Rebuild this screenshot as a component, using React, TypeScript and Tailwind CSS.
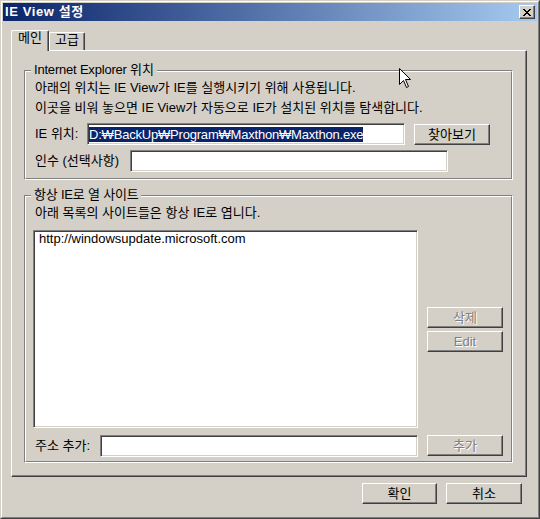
import React from 'react';

const btn =
  'flex items-center justify-center border border-t-white border-l-white border-r-[#404040] border-b-[#404040] shadow-[inset_-1px_-1px_0_#808080] bg-[#d4d0c8] leading-[14px]';
const sunken =
  'border border-t-[#808080] border-l-[#808080] border-r-white border-b-white shadow-[inset_1px_1px_0_#404040,inset_-1px_-1px_0_#d4d0c8] bg-white';
const disabledText = 'text-[#808080] [text-shadow:1px_1px_0_#ffffff]';

function Group({ label, className, children }: { label: string; className?: string; children?: React.ReactNode }) {
  return (
    <div className={`relative border border-t-[#808080] border-l-[#808080] border-r-white border-b-white ${className ?? ''}`}>
      <div className="h-full border border-t-white border-l-white border-r-[#808080] border-b-[#808080]">{children}</div>
      <span className="absolute left-[6px] top-[-8px] px-[3px] bg-[#d4d0c8] leading-[14px] whitespace-nowrap tracking-[-0.2px]">{label}</span>
    </div>
  );
}

function CloseX() {
  const rows: [number, number][][] = [
    [[0, 2], [6, 2]],
    [[1, 2], [5, 2]],
    [[2, 4]],
    [[3, 2]],
    [[2, 4]],
    [[1, 2], [5, 2]],
    [[0, 2], [6, 2]],
  ];
  return (
    <svg width="8" height="7" viewBox="0 0 8 7" shapeRendering="crispEdges">
      {rows.map((r, y) => r.map(([x, w], i) => <rect key={`${y}-${i}`} x={x} y={y} width={w} height={1} fill="#000" />))}
    </svg>
  );
}

function Cursor() {
  return (
    <svg width="13" height="21" viewBox="0 0 13 21" className="absolute left-[398px] top-[67px]">
      <path d="M0.5 0.5 V16.5 L4.5 12.5 L7.5 19.5 L9.5 18.5 L6.5 11.5 H11.5 Z" fill="#fff" stroke="#000" strokeWidth="1" />
    </svg>
  );
}

export default function App() {
  return (
    <div className="relative w-[540px] h-[519px] bg-[#d4d0c8] border border-t-[#d4d0c8] border-l-[#d4d0c8] border-r-[#404040] border-b-[#404040] [font-family:'Liberation_Sans','Noto_Sans_CJK_KR',sans-serif] text-[13px] leading-[14px] text-black">
      <div className="h-full border border-t-white border-l-white border-r-[#808080] border-b-[#808080] p-px flex flex-col">
        {/* title bar */}
        <div className="h-[18px] shrink-0 flex items-center bg-linear-to-r/srgb from-[#0a246a] to-[#a6caf0] pl-[2px] pr-[2px]">
          <span className="text-white font-bold text-[13px] leading-[14px] tracking-[0.6px]">IE View 설정</span>
          <div className={`ml-auto w-[16px] h-[14px] ${btn}`}>
            <CloseX />
          </div>
        </div>

        {/* body */}
        <div className="flex-1 px-[8px] pt-[9px]">
          {/* tabs */}
          <div className="relative z-10 flex items-end h-[21px] mb-[-1px]">
            <div className="w-[38px] h-[21px] border-l border-t border-l-white border-t-white border-r border-r-[#404040] shadow-[inset_-1px_0_0_#808080] bg-[#d4d0c8] rounded-tl-[2px] rounded-tr-[2px] text-center">
              메인
            </div>
            <div className="w-[36px] h-[18px] mb-px border-l border-t border-l-white border-t-white border-r border-r-[#404040] shadow-[inset_-1px_0_0_#808080] bg-[#d4d0c8] rounded-tl-[2px] rounded-tr-[2px] text-center">
              고급
            </div>
          </div>

          {/* panel */}
          <div className="w-[516px] h-[427px] border border-t-white border-l-white border-r-[#404040] border-b-[#404040] shadow-[inset_-1px_-1px_0_#808080] pt-[19px] pl-[12px]">
            <Group label="Internet Explorer 위치" className="w-[489px] h-[110px]">
              <div className="pt-[6px] pl-[9px]">
                <p className="leading-[20px] whitespace-nowrap">아래의 위치는 IE View가 IE를 실행시키기 위해 사용됩니다.</p>
                <p className="leading-[20px] whitespace-nowrap">이곳을 비워 놓으면 IE View가 자동으로 IE가 설치된 위치를 탐색합니다.</p>
                <div className="mt-[5px] flex items-start h-[22px]">
                  <span className="w-[52px] leading-[22px] whitespace-nowrap">IE 위치:</span>
                  <div className={`w-[318px] h-[22px] ${sunken} flex items-center pl-px overflow-hidden`}>
                    <span className="bg-[#0a246a] text-white leading-[15px] whitespace-nowrap tracking-[-0.2px]">D:₩BackUp₩Program₩Maxthon₩Maxthon.exe</span>
                  </div>
                  <div className={`ml-[9px] mt-px w-[76px] h-[21px] ${btn}`}>찾아보기</div>
                </div>
                <div className="mt-[5px] flex items-start h-[22px]">
                  <span className="w-[95px] leading-[22px] whitespace-nowrap">인수 (선택사항)</span>
                  <div className={`w-[318px] h-[22px] ${sunken}`} />
                </div>
              </div>
            </Group>

            <Group label="항상 IE로 열 사이트" className="mt-[15px] w-[489px] h-[268px]">
              <div className="pt-[6px] pl-[7px]">
                <p className="leading-[20px] pl-[2px] whitespace-nowrap">아래 목록의 사이트들은 항상 IE로 엽니다.</p>
                <div className="mt-[7px] flex">
                  <div className={`w-[385px] h-[198px] ${sunken} pl-[5px] pt-px leading-[14px]`}>http://windowsupdate.microsoft.com</div>
                  <div className="ml-[9px] pt-[77px] flex flex-col gap-[3px]">
                    <div className={`w-[76px] h-[21px] ${btn} ${disabledText}`}>삭제</div>
                    <div className={`w-[76px] h-[21px] ${btn} ${disabledText}`}>Edit</div>
                  </div>
                </div>
                <div className="mt-[7px] flex items-start h-[22px]">
                  <span className="w-[67px] pl-[2px] leading-[22px] whitespace-nowrap">주소 추가:</span>
                  <div className={`w-[318px] h-[22px] ${sunken}`} />
                  <div className={`ml-[9px] w-[76px] h-[21px] ${btn} ${disabledText}`}>추가</div>
                </div>
              </div>
            </Group>
          </div>

          {/* dialog buttons */}
          <div className="mt-[6px] flex justify-end gap-[9px] pr-[7px]">
            <div className={`w-[75px] h-[21px] ${btn}`}>확인</div>
            <div className={`w-[76px] h-[21px] ${btn}`}>취소</div>
          </div>
        </div>
      </div>
      <Cursor />
    </div>
  );
}
